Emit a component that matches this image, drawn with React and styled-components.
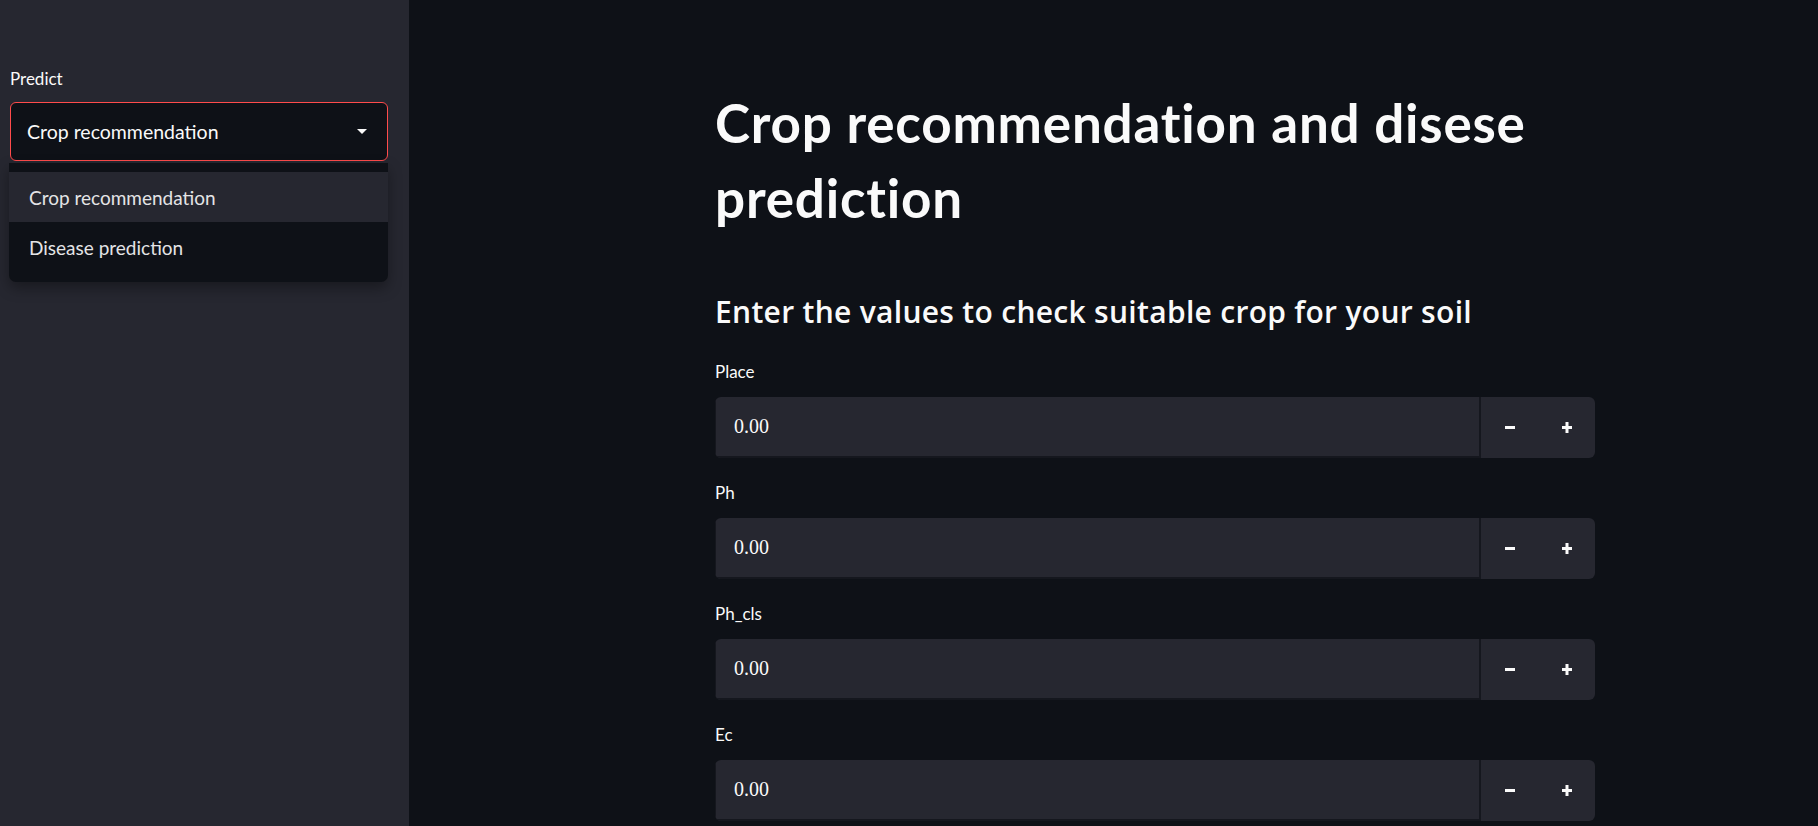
import React from 'react';
import styled, { createGlobalStyle } from 'styled-components';

const GlobalStyle = createGlobalStyle`
  html, body {
    margin: 0;
    padding: 0;
    background: #0e1117;
  }
  body {
    font-family: Lato, "Noto Sans", sans-serif;
    color: #fafafa;
  }
`;

const Page = styled.div`
  display: flex;
  height: 826px;
  overflow: hidden;
`;

const Sidebar = styled.aside`
  width: 409px;
  flex-shrink: 0;
  background: #262730;
  padding: 67px 21px 0 10px;
  box-sizing: border-box;
`;

const Label = styled.div`
  font-size: 17px;
  line-height: 24px;
  color: #fafafa;
  margin-bottom: ${p => p.$gap || 13}px;
`;

const SelectWrap = styled.div`
  position: relative;
`;

const SelectBox = styled.div`
  height: 59px;
  box-sizing: border-box;
  border: 1px solid #ff4b4b;
  border-radius: 6px;
  background: #0e1117;
  display: flex;
  align-items: center;
  justify-content: space-between;
  padding: 0 20px 0 16px;
  font-size: 19.5px;
  color: #fafafa;
`;

const Menu = styled.ul`
  position: absolute;
  top: 61px;
  left: -1px;
  right: 0;
  margin: 0;
  padding: 9px 0 10px;
  list-style: none;
  background: #0e1117;
  border-radius: 0 0 7px 7px;
  box-shadow: 0 6px 14px rgba(0, 0, 0, 0.35);
`;

const MenuItem = styled.li`
  height: 50px;
  display: flex;
  align-items: center;
  padding-left: 20px;
  font-size: 19px;
  color: #e4e4e6;
  background: ${p => (p.$active ? '#262730' : 'transparent')};
`;

const Main = styled.main`
  flex: 1;
  padding: 85px 0 0 306px;
  box-sizing: border-box;
`;

const Content = styled.div`
  width: 880px;
`;

const Title = styled.h1`
  margin: 0;
  font-size: 53px;
  line-height: 75px;
  font-weight: 700;
  letter-spacing: 0.8px;
  color: #fafafa;
`;

const Subtitle = styled.h3`
  margin: 60px 0 30px;
  font-family: "Open Sans", Lato, sans-serif;
  font-size: 30px;
  line-height: 34.8px;
  font-weight: 600;
  letter-spacing: 0.3px;
  color: #fafafa;
`;

const Field = styled.div`
  margin-bottom: 23px;
`;

const NumberBox = styled.div`
  height: 61px;
  display: flex;
  background: #262730;
  border-radius: 6px;
  overflow: hidden;
`;

const NumberInput = styled.div`
  flex: 1;
  display: flex;
  align-items: center;
  padding-left: 18px;
  border-left: 1px solid #15171e;
  border-right: 2px solid #15171e;
  border-bottom: 2px solid #15171e;
  font-family: "Liberation Serif", "Times New Roman", serif;
  font-size: 20px;
  color: #fafafa;
`;

const StepButton = styled.div`
  width: 57px;
  display: flex;
  align-items: center;
  justify-content: center;
  color: #fafafa;
`;

const Caret = () => (
  <svg width="10" height="5" viewBox="0 0 10 5">
    <polygon points="0,0 10,0 5,5" fill="#fafafa" />
  </svg>
);

const MinusIcon = () => (
  <svg width="10" height="10" viewBox="0 0 10 10">
    <rect x="0" y="4" width="10" height="3" fill="#fafafa" />
  </svg>
);

const PlusIcon = () => (
  <svg width="10" height="11" viewBox="0 0 10 11">
    <rect x="0" y="4" width="10" height="3" fill="#fafafa" />
    <rect x="3.5" y="0" width="3" height="11" fill="#fafafa" />
  </svg>
);

const fields = ['Place', 'Ph', 'Ph_cls', 'Ec'];

export default function App() {
  return (
    <>
      <GlobalStyle />
      <Page>
        <Sidebar>
          <Label $gap={11}>Predict</Label>
          <SelectWrap>
            <SelectBox>
              <span>Crop recommendation</span>
              <Caret />
            </SelectBox>
            <Menu>
              <MenuItem $active>Crop recommendation</MenuItem>
              <MenuItem>Disease prediction</MenuItem>
            </Menu>
          </SelectWrap>
        </Sidebar>
        <Main>
          <Content>
            <Title>Crop recommendation and disese prediction</Title>
            <Subtitle>Enter the values to check suitable crop for your soil</Subtitle>
            {fields.map(name => (
              <Field key={name}>
                <Label>{name}</Label>
                <NumberBox>
                  <NumberInput>0.00</NumberInput>
                  <StepButton><MinusIcon /></StepButton>
                  <StepButton><PlusIcon /></StepButton>
                </NumberBox>
              </Field>
            ))}
          </Content>
        </Main>
      </Page>
    </>
  );
}
